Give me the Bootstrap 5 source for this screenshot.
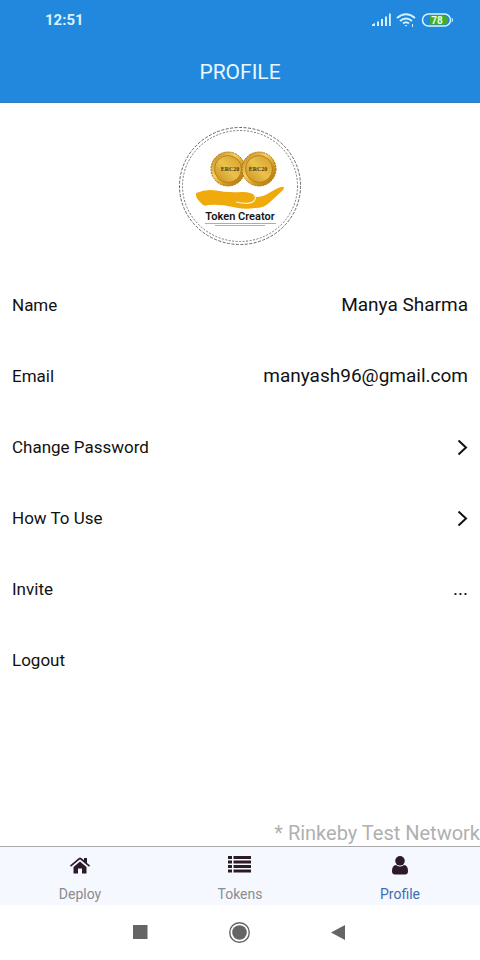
<!DOCTYPE html>
<html lang="en">
<head>
<meta charset="utf-8">
<meta name="viewport" content="width=device-width, initial-scale=1">
<title>Profile</title>
<link rel="stylesheet" href="https://cdn.jsdelivr.net/npm/bootstrap@5.3.0/dist/css/bootstrap.min.css">
<style>
  body { font-family: Roboto, "Liberation Sans", sans-serif; color: #111; background: #fff; }
  .app-header { background: #2288dd; border-bottom: 1px solid #2f7dbb; color: #e9f8ff; }
  .status-row { height: 40px; padding: 0 26px 0 45px; }
  .status-time { font-size: 15px; font-weight: 700; color: #d9f3ff; }
  .app-title { font-size: 21px; line-height: 24px; padding: 20px 0 18px; }
  .logo-area { padding: 23px 0 22px; }
  .setting { height: 71px; padding: 2px 12px 0; font-size: 17px; color: #111; background: none; border: 0; }
  .setting-value { font-size: 19px; }
  .network-note { font-size: 20px; line-height: 26px; color: #b0b0b0; }
  .tab-bar { background: #f5f8fe; border-top: 1px solid #a9a9a9; }
  .tab-item { height: 58px; padding: 8px 0 1px; font-size: 14px; line-height: 20px; color: #8c8c8f; }
  .tab-item.active { color: #3f6db5; }
  .tab-item svg { fill: #2b1a27; }
  .system-nav { height: 55px; padding-right: 2px; gap: 77px; }
</style>
<script src="https://cdn.jsdelivr.net/npm/bootstrap@5.3.0/dist/js/bootstrap.bundle.min.js"></script>
</head>
<body class="d-flex flex-column min-vh-100">
<header class="app-header">
  <div class="status-row d-flex align-items-center justify-content-between">
    <span class="status-time">12:51</span>
    <div class="d-flex align-items-center gap-1">
      <svg width="20" height="14" viewBox="0 0 20 14" fill="#d5f1ff" aria-label="Signal">
        <path d="M0 13v-1.500l3-1.500v3zM5 8.500h2V13H5zM9 6h2v7H9zM13 3.500h2V13h-2zM17 .5h1.800V13H17z"/>
      </svg>
      <svg width="20" height="14" viewBox="0 0 20 14" fill="none" stroke="#d5f1ff" stroke-width="2" aria-label="Wi-Fi">
        <path d="M1 5Q10-2.500 19 5M4 8q6-5 12 0M7 10.500q3-2.500 6 0"/>
        <path d="M8.500 12h3L10 13.500z" fill="#d5f1ff" stroke="none"/>
        <path d="M16.500 11v3" stroke-width="1"/>
      </svg>
      <svg width="34" height="16" viewBox="0 0 34 16" aria-label="Battery 78 percent">
        <path d="M10 3.500h14q4 1 4 4.500t-4 4.500H10z" fill="#45ad2a"/>
        <rect x="2.500" y="2" width="28" height="12" rx="6" fill="none" stroke="#d5f6f5" stroke-width="1.500"/>
        <path d="M32 6q1 2 0 4" fill="none" stroke="#d5f6f5"/>
        <text x="17" y="11.500" text-anchor="middle" font-family="Roboto" font-size="10" font-weight="700" fill="#e8ffe0">78</text>
      </svg>
    </div>
  </div>
  <h1 class="app-title fw-normal text-center m-0">PROFILE</h1>
</header>

<main class="flex-grow-1 d-flex flex-column">
  <div class="logo-area text-center">
    <svg class="d-block mx-auto" width="124" height="121" viewBox="0 0 124 121" role="img" aria-label="Token Creator logo">
      <defs>
        <linearGradient id="gold" x1="0" y1="0" x2="1" y2="1">
          <stop offset="0" stop-color="#b77a10"/><stop offset=".4" stop-color="#f5d065"/><stop offset=".65" stop-color="#d39a20"/><stop offset="1" stop-color="#a76d0c"/>
        </linearGradient>
        <linearGradient id="face" x1="0" y1="1" x2="1" y2="0">
          <stop offset="0" stop-color="#c88b19"/><stop offset=".5" stop-color="#ebc14c"/><stop offset="1" stop-color="#d29c27"/>
        </linearGradient>
      </defs>
      <g fill="none" stroke="#555">
        <ellipse cx="62" cy="60" rx="60.500" ry="58.500" stroke-dasharray="3 1.500" stroke-width=".9"/>
        <ellipse cx="62" cy="60" rx="57.500" ry="55.500" stroke-dasharray="2 1.500" stroke-width=".8"/>
      </g>
      <g stroke="#ad7412">
        <circle cx="50" cy="43" r="17" fill="url(#gold)" stroke-dasharray="2 1"/>
        <circle cx="50" cy="43" r="13.500" fill="url(#face)" stroke-width=".8"/>
        <circle cx="81" cy="43" r="17" fill="url(#gold)" stroke-dasharray="2 1"/>
        <circle cx="81" cy="43" r="13.500" fill="url(#face)" stroke-width=".8"/>
      </g>
      <g font-family="Liberation Serif, serif" font-size="6" font-weight="700" fill="#56350a" text-anchor="middle">
        <text x="52" y="45">ERC20</text>
        <text x="80" y="45">ERC20</text>
      </g>
      <path d="M18 67Q28 63 38 64.500Q49 67 64 66Q75 66 78 71Q85 71 91 67L98 63Q104 60 105.500 61Q107 62 104 65L91 77Q86 82 77 82Q65 84 55 81Q42 78 30 79Q26 81 24 78Q17 72 18 67Z" fill="#f1aa0c"/>
      <path d="M58 76Q72 79 76 75Q79 71 76 69" fill="none" stroke="#fff2c8" stroke-width="1.200"/>
      <text x="62" y="94" text-anchor="middle" font-family="Roboto" font-size="11" font-weight="600" fill="#161616">Token Creator</text>
      <path d="M27 97.500h71M37 99.500h50" stroke="#8a8a8a" stroke-width=".7"/>
    </svg>
  </div>

  <div class="d-flex flex-column">
    <div class="setting d-flex align-items-center justify-content-between"><span>Name</span><span class="setting-value">Manya Sharma</span></div>
    <div class="setting d-flex align-items-center justify-content-between"><span>Email</span><span class="setting-value">manyash96@gmail.com</span></div>
    <button type="button" class="setting d-flex align-items-center justify-content-between"><span>Change Password</span>
      <svg width="11" height="16" viewBox="0 0 11 16" fill="none" stroke="#111" stroke-width="2" aria-hidden="true"><path d="M1.500 .5l7.500 7-7.500 7"/></svg></button>
    <button type="button" class="setting d-flex align-items-center justify-content-between"><span>How To Use</span>
      <svg width="11" height="16" viewBox="0 0 11 16" fill="none" stroke="#111" stroke-width="2" aria-hidden="true"><path d="M1.500 .5l7.500 7-7.500 7"/></svg></button>
    <button type="button" class="setting d-flex align-items-center justify-content-between"><span>Invite</span><span class="setting-value">...</span></button>
    <button type="button" class="setting d-flex align-items-center justify-content-between"><span>Logout</span></button>
  </div>

  <p class="network-note text-end mt-auto mb-0">* Rinkeby Test Network</p>
</main>

<nav class="tab-bar row g-0" aria-label="Main">
  <a href="#deploy" class="tab-item col d-flex flex-column align-items-center justify-content-between text-decoration-none">
    <svg width="20" height="22" viewBox="0 0 20 22" aria-hidden="true"><path d="M10 6.500l6.500 5.500v6.500H12v-5H8v5H3.500V12z"/><path d="M0 10.500L8.800 3q1.200-1 2.400 0L14 5.300V3h3v5l3 2.500-1 1.200-9-7.400-9 7.400z"/></svg>
    Deploy
  </a>
  <a href="#tokens" class="tab-item col d-flex flex-column align-items-center justify-content-between text-decoration-none">
    <svg width="24" height="22" viewBox="0 0 24 22" aria-hidden="true"><path d="M0 1h4v3H0zM5.500 1H23v3H5.500zM0 5.500h4v3H0zM5.500 5.500H23v3H5.500zM0 10h4v3H0zM5.500 10H23v3H5.500zM0 14.500h4v3H0zM5.500 14.500H23v3H5.500z"/></svg>
    Tokens
  </a>
  <a href="#profile" class="tab-item active col d-flex flex-column align-items-center justify-content-between text-decoration-none" aria-current="page">
    <svg width="18" height="22" viewBox="0 0 18 22" aria-hidden="true"><circle cx="9" cy="5.800" r="4.800"/><path d="M5 10q4 3 8 0 4 .5 4 6 0 3.500-3 3.500H4q-3 0-3-3.500 0-5.500 4-6z"/></svg>
    Profile
  </a>
</nav>

<footer class="system-nav d-flex align-items-center justify-content-center bg-white">
  <button type="button" class="btn p-0 border-0 lh-1" aria-label="Recent apps"><svg class="d-block" width="22" height="22" viewBox="0 0 22 22" fill="#656565"><rect x="4" y="3" width="14.500" height="14"/></svg></button>
  <button type="button" class="btn p-0 border-0 lh-1" aria-label="Home"><svg class="d-block" width="22" height="22" viewBox="0 0 22 22"><circle cx="11.500" cy="10.500" r="9.800" fill="none" stroke="#656565" stroke-width="1.400"/><circle cx="11.500" cy="10.500" r="7.300" fill="#656565"/></svg></button>
  <button type="button" class="btn p-0 border-0 lh-1" aria-label="Back"><svg class="d-block" width="22" height="22" viewBox="0 0 22 22" fill="#656565"><path d="M4 10.500L18 3v15z"/></svg></button>
</footer>
</body>
</html>
